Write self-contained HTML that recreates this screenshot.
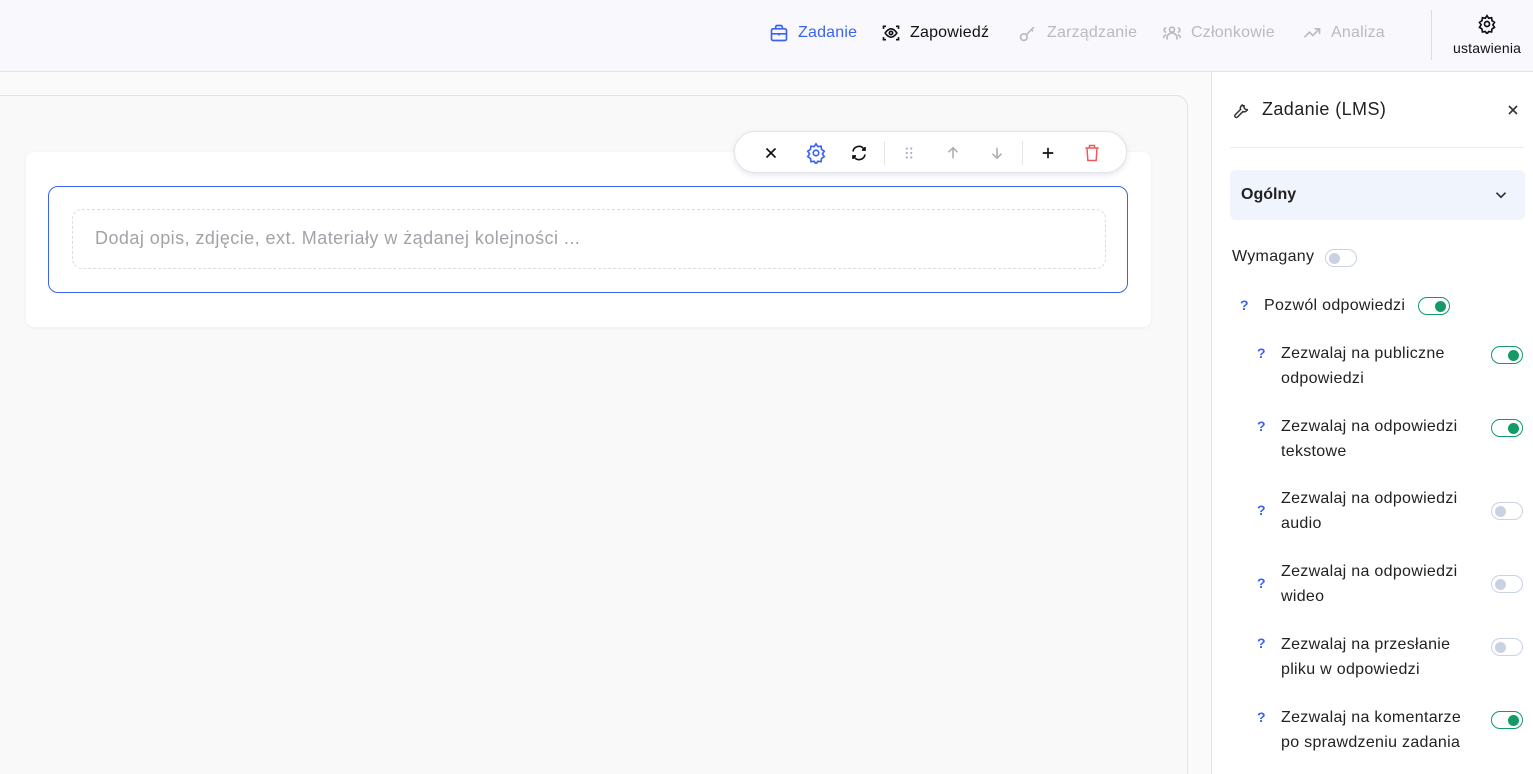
<!DOCTYPE html>
<html><head><meta charset="utf-8"><style>
*{box-sizing:border-box;margin:0;padding:0}
html,body{width:1533px;height:774px;overflow:hidden}
body{font-family:"Liberation Sans",sans-serif;background:#fafafa;position:relative;color:#1f2328}
.hdr{position:absolute;left:0;top:0;width:1533px;height:72px;background:#f9f9fd;border-bottom:1px solid #e3e4e8}
.nav{position:absolute;top:23px;display:flex;align-items:center;font-size:16px;gap:9px;letter-spacing:.2px}
.nav svg{width:20px;height:20px}
.main{position:absolute;left:-10px;top:95px;width:1198px;height:690px;border:1px solid #e3e3e3;border-radius:0 12px 0 0;background:#f9f9f9}
.card{position:absolute;left:26px;top:152px;width:1125px;height:175px;background:#fff;border-radius:8px;box-shadow:0 1px 4px rgba(0,0,0,.05)}
.inner{position:absolute;left:48px;top:186px;width:1080px;height:107px;border:1px solid #3a63ee;border-radius:10px;background:#fff}
.dash{position:absolute;left:23px;top:22px;width:1034px;height:60px;border:1.5px dashed #dcdcdc;border-radius:10px;font-size:18px;letter-spacing:.45px;color:#a0a3a8;padding:18px 0 0 22px}
.tb{position:absolute;left:734px;top:131px;width:393px;height:42px;background:#fff;border-radius:21px;border:1px solid #e2e4ea;box-shadow:0 2px 6px rgba(40,50,90,.12)}
.tb svg{position:absolute;top:12px;width:18px;height:18px}
.side{position:absolute;left:1211px;top:72px;width:322px;height:702px;background:#fff;border-left:1px solid #e3e4e8}
.tg{position:absolute;width:32px;height:18px;border-radius:9px;border:1px solid #c9d3e2;background:#fff}
.tg::after{content:"";position:absolute;left:3px;top:3px;width:11px;height:11px;border-radius:50%;background:#c8d2e2}
.tg.on{border-color:#139a66}
.tg.on::after{left:16px;background:#139a66}
.q{position:absolute;color:#3a63ee;font-size:14px;font-weight:bold}
.lbl{position:absolute;font-size:16px;line-height:25px;color:#222;letter-spacing:.3px}
</style></head><body>
<div class="hdr">
 <div class="nav" style="left:769px;color:#3a63ee"><svg viewBox="0 0 24 24" fill="none" stroke="#3a63ee" stroke-width="2"><rect x="3" y="7" width="18" height="14" rx="2"/><path d="M8 7V5a2 2 0 0 1 2-2h4a2 2 0 0 1 2 2v2M3 13h18M12 12v3"/></svg>Zadanie</div>
 <div class="nav" style="left:881px;color:#111"><svg viewBox="0 0 24 24" fill="none" stroke="#111" stroke-width="2"><path d="M3 7V4h3M18 4h3v3M21 17v3h-3M6 20H3v-3"/><path d="M5 12s3-5 7-5 7 5 7 5-3 5-7 5-7-5-7-5z"/><circle cx="12" cy="12" r="2"/></svg>Zapowiedź</div>
 <div class="nav" style="left:1018px;color:#b8bbc0"><svg viewBox="0 0 24 24" fill="none" stroke="#b8bbc0" stroke-width="2"><circle cx="7" cy="17" r="4"/><path d="M10 14l9-9M16 8l2 2"/></svg>Zarządzanie</div>
 <div class="nav" style="left:1162px;color:#b8bbc0"><svg viewBox="0 0 24 24" fill="none" stroke="#b8bbc0" stroke-width="2"><circle cx="12" cy="8" r="3"/><path d="M6 20v-2a6 6 0 0 1 12 0v2M5 11a2.5 2.5 0 0 1 0-5M19 11a2.5 2.5 0 0 0 0-5M2 18a4 4 0 0 1 3-4M22 18a4 4 0 0 0-3-4"/></svg>Członkowie</div>
 <div class="nav" style="left:1302px;color:#b8bbc0"><svg viewBox="0 0 24 24" fill="none" stroke="#b8bbc0" stroke-width="2"><path d="M3 17l6-6 4 4 8-8M15 7h6v6"/></svg>Analiza</div>
 <div style="position:absolute;left:1431px;top:10px;width:1px;height:50px;background:#ddd"></div>
 <svg style="position:absolute;left:1477px;top:14px" width="20" height="20" viewBox="0 0 24 24" fill="none" stroke="#111" stroke-width="2"><circle cx="12" cy="12" r="3"/><path d="M12 2l2 3 3.5-.5.5 3.5 3 2-2 3 2 3-3 2-.5 3.5-3.5-.5-2 3-2-3-3.5.5L6 18l-3-2 2-3-2-3 3-2 .5-3.5L10 5z"/></svg>
 <div style="position:absolute;left:1453px;top:40px;font-size:14px;color:#111;letter-spacing:.2px">ustawienia</div>
</div>
<div class="main"></div>
<div class="card"></div>
<div class="inner"><div class="dash">Dodaj opis, zdjęcie, ext. Materiały w żądanej kolejności ...</div></div>
<div class="tb">
 <svg style="left:27px" viewBox="0 0 24 24" fill="none" stroke="#111" stroke-width="2.2"><path d="M6 6l12 12M18 6L6 18"/></svg>
 <svg style="left:70px;width:22px;height:22px;top:10px" viewBox="0 0 24 24" fill="none" stroke="#3a63ee" stroke-width="1.8"><circle cx="12" cy="12" r="3"/><path d="M12 2l2 3 3.5-.5.5 3.5 3 2-2 3 2 3-3 2-.5 3.5-3.5-.5-2 3-2-3-3.5.5L6 18l-3-2 2-3-2-3 3-2 .5-3.5L10 5z"/></svg>
 <svg style="left:115px" viewBox="0 0 24 24" fill="none" stroke="#111" stroke-width="2.2"><path d="M4 10a8 8 0 0 1 14-4l2 2M20 4v4h-4M20 14a8 8 0 0 1-14 4l-2-2M4 20v-4h4"/></svg>
 <div style="position:absolute;left:149px;top:9px;width:1px;height:24px;background:#e6e6e6"></div>
 <svg style="left:165px" viewBox="0 0 24 24" fill="#aab2c0"><circle cx="9" cy="6" r="1.5"/><circle cx="15" cy="6" r="1.5"/><circle cx="9" cy="12" r="1.5"/><circle cx="15" cy="12" r="1.5"/><circle cx="9" cy="18" r="1.5"/><circle cx="15" cy="18" r="1.5"/></svg>
 <svg style="left:209px" viewBox="0 0 24 24" fill="none" stroke="#aaa" stroke-width="2"><path d="M12 19V5M6 11l6-6 6 6"/></svg>
 <svg style="left:253px" viewBox="0 0 24 24" fill="none" stroke="#aaa" stroke-width="2"><path d="M12 5v14M6 13l6 6 6-6"/></svg>
 <div style="position:absolute;left:287px;top:9px;width:1px;height:24px;background:#e6e6e6"></div>
 <svg style="left:304px" viewBox="0 0 24 24" fill="none" stroke="#111" stroke-width="2.2"><path d="M12 5v14M5 12h14"/></svg>
 <svg style="left:347px;width:20px;height:20px;top:11px" viewBox="0 0 24 24" fill="none" stroke="#ef5a5a" stroke-width="1.8"><path d="M4 6h16M9 6V3h6v3M6 6l1 15h10l1-15"/></svg>
</div>
<div class="side">
 <svg style="position:absolute;left:21px;top:29px" width="18" height="18" viewBox="0 0 24 24" fill="none" stroke="#333" stroke-width="2"><path d="M14.7 6.3a4 4 0 0 0 5 5l-2 2a4 4 0 0 1-4.5.8L6 21.3a2 2 0 0 1-3-3l7.2-7.2a4 4 0 0 1 .8-4.5l2-2a4 4 0 0 0-1.3 1.7z"/></svg>
 <div style="position:absolute;left:50px;top:27px;font-size:18px;color:#222;letter-spacing:.4px">Zadanie (LMS)</div>
 <svg style="position:absolute;left:293px;top:30px" width="16" height="16" viewBox="0 0 24 24" fill="none" stroke="#333" stroke-width="2.4"><path d="M6 6l12 12M18 6L6 18"/></svg>
 <div style="position:absolute;left:18px;top:75px;width:294px;height:1px;background:#eee"></div>
 <div style="position:absolute;left:18px;top:98px;width:295px;height:50px;background:#eff4fd;border-radius:6px"></div>
 <div style="position:absolute;left:29px;top:114px;font-size:16px;font-weight:bold;color:#222">Ogólny</div>
 <svg style="position:absolute;left:280px;top:114px" width="18" height="18" viewBox="0 0 24 24" fill="none" stroke="#333" stroke-width="2.2"><path d="M6 9l6 6 6-6"/></svg>
 <div class="lbl" style="left:20px;top:172px">Wymagany</div><div class="tg" style="left:113px;top:177px"></div>
 <div class="q" style="left:28px;top:225px">?</div><div class="lbl" style="left:52px;top:221px">Pozwól odpowiedzi</div><div class="tg on" style="left:206px;top:225px"></div>
 <div class="q" style="left:45px;top:273px">?</div><div class="lbl" style="left:69px;top:269px">Zezwalaj na publiczne<br>odpowiedzi</div><div class="tg on" style="left:279px;top:274px"></div>
 <div class="q" style="left:45px;top:346px">?</div><div class="lbl" style="left:69px;top:342px">Zezwalaj na odpowiedzi<br>tekstowe</div><div class="tg on" style="left:279px;top:347px"></div>
 <div class="q" style="left:45px;top:430px">?</div><div class="lbl" style="left:69px;top:414px">Zezwalaj na odpowiedzi<br>audio</div><div class="tg" style="left:279px;top:430px"></div>
 <div class="q" style="left:45px;top:503px">?</div><div class="lbl" style="left:69px;top:487px">Zezwalaj na odpowiedzi<br>wideo</div><div class="tg" style="left:279px;top:503px"></div>
 <div class="q" style="left:45px;top:563px">?</div><div class="lbl" style="left:69px;top:560px">Zezwalaj na przesłanie<br>pliku w odpowiedzi</div><div class="tg" style="left:279px;top:566px"></div>
 <div class="q" style="left:45px;top:637px">?</div><div class="lbl" style="left:69px;top:633px">Zezwalaj na komentarze<br>po sprawdzeniu zadania</div><div class="tg on" style="left:279px;top:639px"></div>
</div>
</body></html>
